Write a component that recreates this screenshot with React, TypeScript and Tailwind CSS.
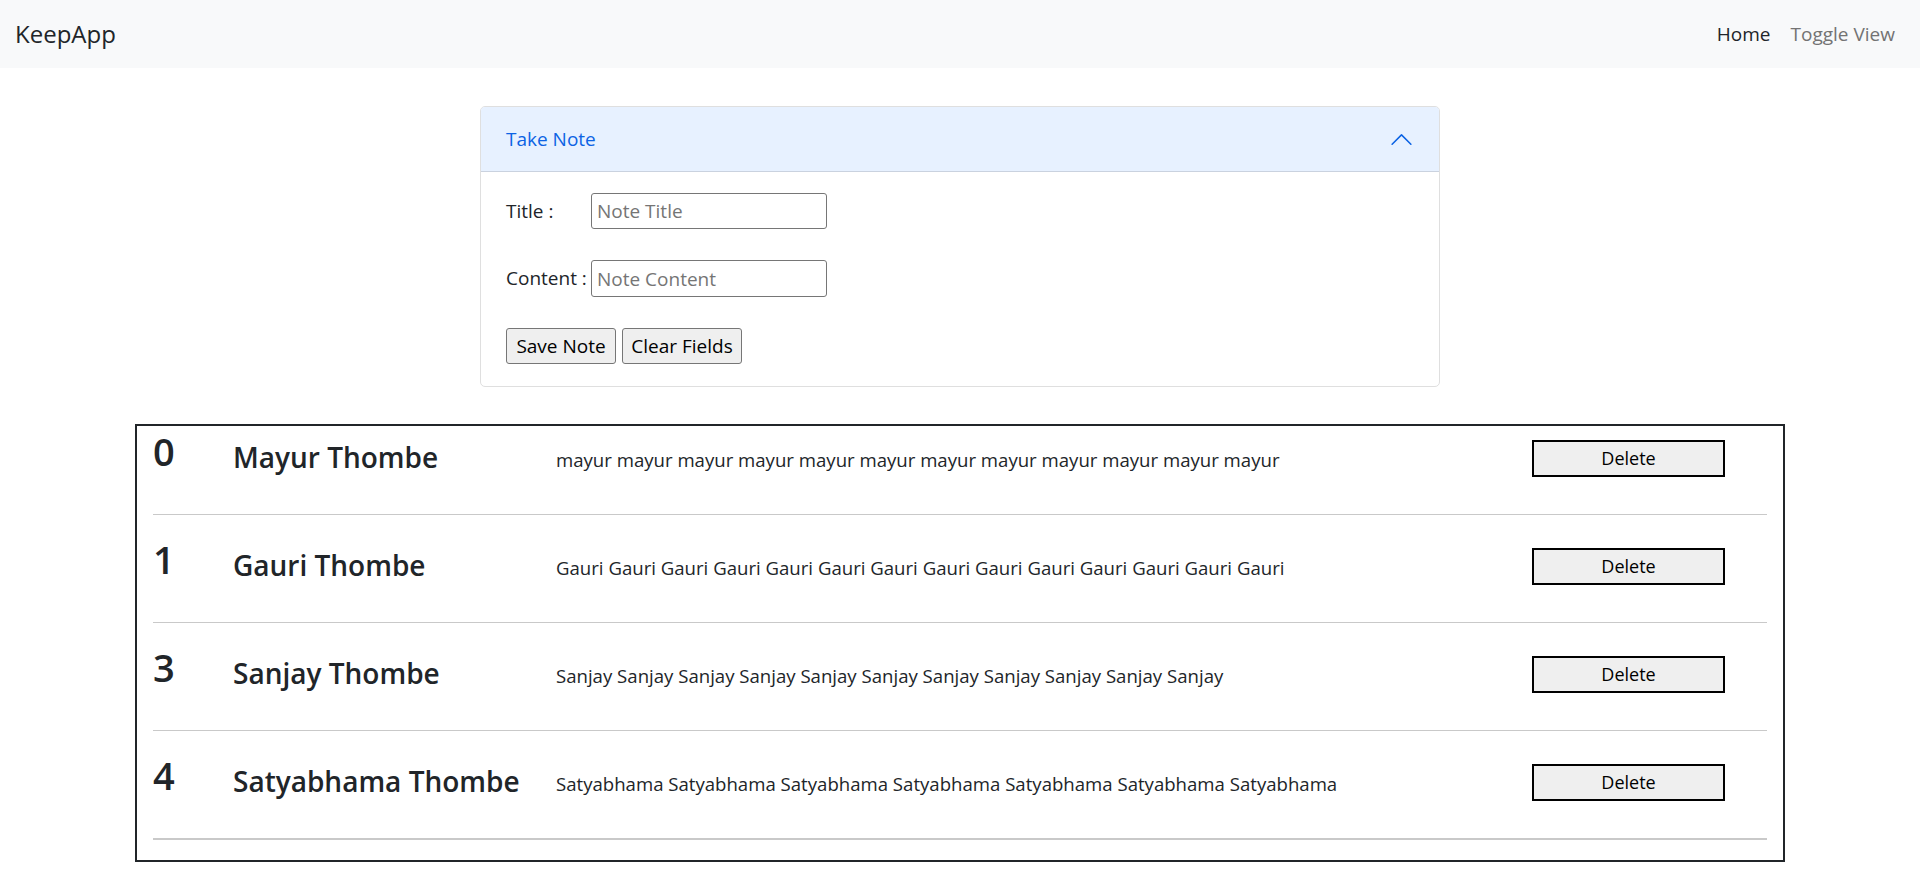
import React from "react";

interface Note {
  id: number;
  title: string;
  content: string;
}

const notes: Note[] = [
  { id: 0, title: "Mayur Thombe", content: Array(12).fill("mayur").join(" ") },
  { id: 1, title: "Gauri Thombe", content: Array(14).fill("Gauri").join(" ") },
  { id: 3, title: "Sanjay Thombe", content: Array(11).fill("Sanjay").join(" ") },
  { id: 4, title: "Satyabhama Thombe", content: Array(7).fill("Satyabhama").join(" ") },
];

function ChevronUp() {
  return (
    <svg width="25" height="25" viewBox="0 0 16 16" fill="#0c63e4" className="rotate-180">
      <path
        fillRule="evenodd"
        d="M1.646 4.646a.5.5 0 0 1 .708 0L8 10.293l5.646-5.647a.5.5 0 0 1 .708.708l-6 6a.5.5 0 0 1-.708 0l-6-6a.5.5 0 0 1 0-.708z"
      />
    </svg>
  );
}

function NavBar() {
  return (
    <nav className="h-[68px] bg-[#f8f9fa] flex items-center justify-between pl-[15px] pr-[15px]">
      <span className="text-[24px] text-[#212529]">KeepApp</span>
      <div className="flex items-center text-[19px]">
        <a className="px-[10px] text-[#212529]">Home</a>
        <a className="px-[10px] text-[#737373]">Toggle View</a>
      </div>
    </nav>
  );
}

function TakeNote() {
  return (
    <div className="w-[960px] mx-auto mt-[38px] border border-[#dfdfdf] rounded-[5px] overflow-hidden">
      <div className="h-[65px] bg-[#e7f1ff] shadow-[inset_0_-1px_0_rgba(0,0,0,0.125)] flex items-center justify-between pl-[25px] pr-[25px]">
        <span className="text-[19px] text-[#0c63e4]">Take Note</span>
        <ChevronUp />
      </div>
      <div className="pl-[25px] pt-[21px] pb-[22px] text-[19px] text-[#212529]">
        <div className="flex items-center h-[36px]">
          <label className="w-[85px]">Title :</label>
          <input
            placeholder="Note Title"
            className="w-[236px] h-[36px] border border-[#767676] rounded-[3px] px-[5px] text-[19px] placeholder:text-[#757575] outline-none"
          />
        </div>
        <div className="flex items-center h-[37px] mt-[31px]">
          <label className="w-[85px]">Content :</label>
          <input
            placeholder="Note Content"
            className="w-[236px] h-[37px] border border-[#767676] rounded-[3px] px-[5px] text-[19px] placeholder:text-[#757575] outline-none"
          />
        </div>
        <div className="flex gap-[6px] mt-[31px]">
          <button className="w-[110px] h-[36px] bg-[#efefef] border border-[#767676] rounded-[3px] text-[19px] text-black">
            Save Note
          </button>
          <button className="w-[120px] h-[36px] bg-[#efefef] border border-[#767676] rounded-[3px] text-[19px] text-black">
            Clear Fields
          </button>
        </div>
      </div>
    </div>
  );
}

function NoteRow({ note, last }: { note: Note; last: boolean }) {
  return (
    <div>
      <div className="h-[68px] flex items-start text-[#212529]">
        <div className="w-[80px] mt-[1px] text-[38px] leading-[48px] font-semibold">{note.id}</div>
        <div className="w-[323px] mt-[11px] text-[28px] leading-[40px] font-semibold whitespace-nowrap">
          {note.title}
        </div>
        <p className="flex-1 mt-[20px] text-[18.6px] leading-[28px] whitespace-nowrap">{note.content}</p>
        <button className="w-[193px] h-[37px] mt-[14px] mr-[42px] bg-[#efefef] border-2 border-black text-[18px] text-black">
          Delete
        </button>
      </div>
      <hr className={`mt-[20px] border-0 ${last ? "h-[2px] mb-[20px]" : "h-px mb-[19px]"} bg-[#c9c9c9]`} />
    </div>
  );
}

export default function App() {
  return (
    <div className="min-h-[888px] bg-white font-['Open_Sans',sans-serif] text-[#212529]">
      <NavBar />
      <TakeNote />
      <div className="w-[1650px] mx-auto mt-[37px] border-2 border-[#212529] px-[16px]">
        {notes.map((n, i) => (
          <NoteRow key={n.id} note={n} last={i === notes.length - 1} />
        ))}
      </div>
    </div>
  );
}
